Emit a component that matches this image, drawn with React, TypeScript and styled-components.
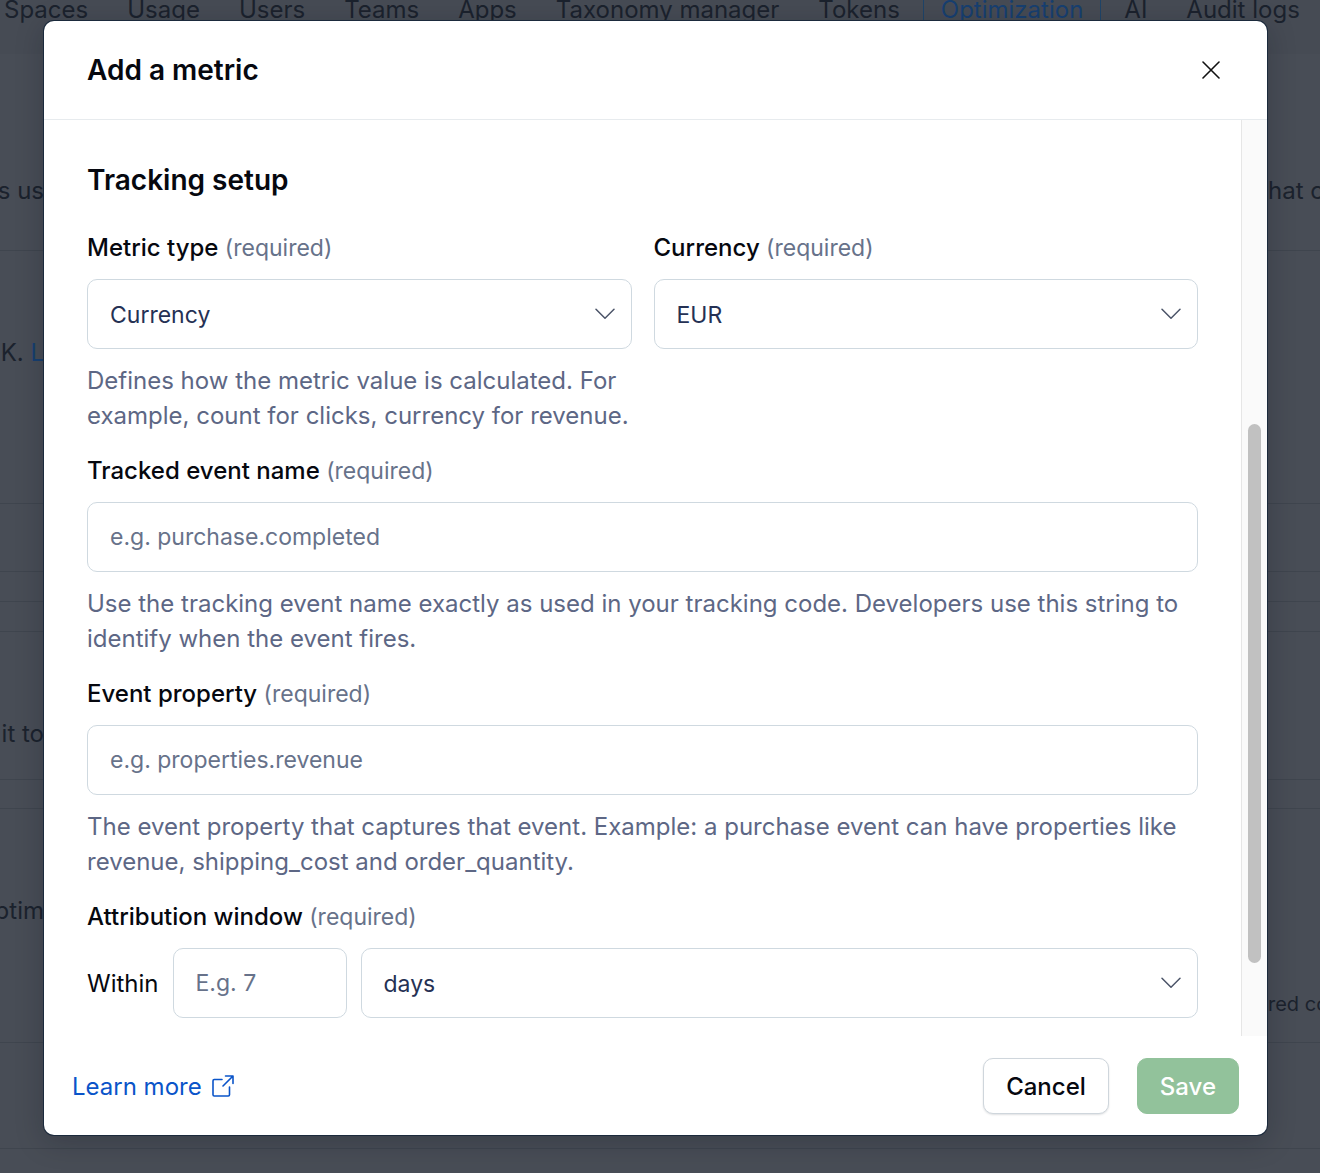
import React, { useId } from "react";
import styled, { createGlobalStyle } from "styled-components";

const Global = createGlobalStyle`
  *, *::before, *::after { box-sizing: border-box; }
  body { margin: 0; background: #484d56; }
  body, button, input, select {
    font-family: Inter, "Liberation Sans", sans-serif;
    font-size: 24px;
    line-height: 35px;
  }
`;

const Stage = styled.div`
  display: grid;
  grid-template-columns: minmax(0, 1fr);
  min-height: 100vh;
  overflow: hidden;
  > * { grid-area: 1 / 1; }
`;

const Page = styled.div`
  display: flex;
  flex-direction: column;
  height: 0;
  min-height: 100%;
  overflow: hidden;
  background: #484d56;
  color: #1b222d;
`;

const Tabs = styled.nav`
  display: flex;
  gap: 39px;
  flex: none;
  height: 54px;
  padding: 0 4px;
  background: #464b54;
  line-height: 19px;
  white-space: nowrap;
`;

const Tab = styled.a<{ $active?: boolean }>`
  height: 54px;
  text-decoration: none;
  color: ${(p) => (p.$active ? "#173f70" : "inherit")};
  padding: ${(p) => (p.$active ? "0 17px" : "0")};
  margin: ${(p) => (p.$active ? "0 -16px" : "0")};
  border: solid #1f4468;
  border-width: ${(p) => (p.$active ? "0 1px" : "0")};
`;

const Band = styled.section<{ $height: number; $top?: number }>`
  display: flex;
  justify-content: space-between;
  flex: none;
  height: ${(p) => p.$height}px;
  padding-top: ${(p) => p.$top ?? 0}px;
  border-bottom: 1px solid #3f454e;
  white-space: nowrap;
`;

const LeftEdge = styled.div`
  display: flex;
  justify-content: flex-end;
  width: 44px;
  overflow: hidden;
  white-space: pre;
`;

const RightEdge = styled.div<{ $low?: boolean }>`
  width: 52px;
  overflow: hidden;
  font-size: ${(p) => (p.$low ? 20 : 24)}px;
  padding-top: ${(p) => (p.$low ? 94 : 0)}px;
`;

const PageLink = styled.a`
  color: #173f70;
  text-decoration: none;
`;

const Dialog = styled.div`
  display: flex;
  flex-direction: column;
  z-index: 1;
  align-self: start;
  margin: 21px 53px 38px 44px;
  border-radius: 10px;
  background: #fff;
  color: #06080f;
  box-shadow: 0 0 0 1px #1b2a3c, 0 6px 28px rgba(10, 16, 26, 0.25);
`;

const Header = styled.header`
  display: flex;
  align-items: center;
  justify-content: space-between;
  height: 99px;
  padding: 0 43px;
  border-bottom: 1px solid #e7ebee;
`;

const Title = styled.h2`
  margin: 0;
  font-size: 28px;
  line-height: 36px;
  font-weight: 600;
`;

const CloseButton = styled.button`
  display: grid;
  place-items: center;
  width: 26px;
  height: 26px;
  padding: 0;
  border: 0;
  background: none;
  color: #111;
`;

const Body = styled.div`
  display: grid;
  grid-template-columns: minmax(0, 1fr) 26px;
`;

const Form = styled.form`
  display: flex;
  flex-direction: column;
  gap: 20px;
  padding: 42px 43px 18px;
`;

const SectionTitle = styled.h3`
  margin: 0 0 12px;
  font-size: 28px;
  line-height: 36px;
  font-weight: 600;
`;

const Columns = styled.div`
  display: grid;
  grid-template-columns: 1fr 1fr;
  gap: 22px;
`;

const FieldBox = styled.div`
  display: flex;
  flex-direction: column;
  gap: 14px;
  min-width: 0;
`;

const Label = styled.label`
  font-weight: 500;
`;

const Required = styled.span`
  font-size: 23px;
  line-height: 1;
  font-weight: 400;
  color: #67728a;
`;

const Hint = styled.p`
  margin: 0;
  color: #5d6785;
`;

const Input = styled.input<{ $width?: number }>`
  width: ${(p) => (p.$width ? `${p.$width}px` : "100%")};
  height: 70px;
  padding: 0 22px;
  border: 1px solid #cfd9e0;
  border-radius: 10px;
  background: #fff;
  color: #253154;
  font-size: 23px;
  &::placeholder { color: #67728a; opacity: 1; }
`;

const SelectBox = styled.div`
  display: grid;
  align-items: center;
  flex: 1;
  > * { grid-area: 1 / 1; }
  > svg { justify-self: end; margin-right: 17px; pointer-events: none; }
`;

const SelectControl = styled.select`
  appearance: none;
  width: 100%;
  height: 70px;
  padding: 2px 50px 0 22px;
  border: 1px solid #cfd9e0;
  border-radius: 10px;
  background: #fff;
  color: #253154;
  font-size: 23px;
`;

const Inline = styled.div`
  display: flex;
  align-items: center;
  gap: 14px;
`;

const Track = styled.div`
  display: grid;
  grid-template-rows: 304fr 539fr 73fr;
  padding: 0 6px;
  border-left: 1px solid #e6e6e6;
  background: #fafafa;
`;

const Thumb = styled.div`
  grid-row: 2;
  border-radius: 7px;
  background: #c1c1c1;
`;

const Footer = styled.footer`
  display: flex;
  align-items: center;
  gap: 28px;
  padding: 22px 28px 21px;
`;

const LearnMore = styled.a`
  display: flex;
  align-items: center;
  gap: 10px;
  margin-right: auto;
  color: #0a54c9;
  text-decoration: none;
`;

const Button = styled.button<{ $primary?: boolean }>`
  height: 56px;
  padding: 0 22px;
  border-radius: 10px;
  border: 1px solid ${(p) => (p.$primary ? "#92c29b" : "#cfd6dc")};
  background: ${(p) => (p.$primary ? "#92c29b" : "#fff")};
  color: ${(p) => (p.$primary ? "#fff" : "#06080f")};
  box-shadow: ${(p) => (p.$primary ? "none" : "0 1px 2px rgba(25, 37, 50, 0.14)")};
  font-weight: 500;
`;

const Chevron = () => (
  <svg width="20" height="12" viewBox="0 0 20 12" fill="none" stroke="#4b5468" strokeWidth="1.5" aria-hidden="true">
    <path d="M1 1.2 10 10.2 19 1.2" strokeLinecap="round" strokeLinejoin="round" />
  </svg>
);

const External = () => (
  <svg width="22" height="22" viewBox="0 0 22 22" fill="none" stroke="currentColor" strokeWidth="1.6" aria-hidden="true">
    <path d="M10 4.5H2.2Q1 4.5 1 5.7V19.8Q1 21 2.2 21H16.3Q17.5 21 17.5 19.8V12" strokeLinecap="round" />
    <path d="M13.5 1H21V8.5M21 1 11 11" strokeLinecap="round" strokeLinejoin="round" />
  </svg>
);

type FieldProps = {
  label: string;
  hint?: string;
  children: (id: string) => React.ReactNode;
};

function Field({ label, hint, children }: FieldProps) {
  const id = useId();
  return (
    <FieldBox>
      <Label htmlFor={id}>
        {label} <Required>(required)</Required>
      </Label>
      {children(id)}
      {hint && <Hint>{hint}</Hint>}
    </FieldBox>
  );
}

function Select({ id, options, label }: { id?: string; options: string[]; label?: string }) {
  return (
    <SelectBox>
      <SelectControl id={id} aria-label={label}>
        {options.map((o) => (
          <option key={o}>{o}</option>
        ))}
      </SelectControl>
      <Chevron />
    </SelectBox>
  );
}

const tabs = ["Spaces", "Usage", "Users", "Teams", "Apps", "Taxonomy manager", "Tokens", "Optimization", "AI", "Audit logs"];

export default function App() {
  return (
    <>
      <Global />
      <Stage>
        <Page>
          <Tabs>
            {tabs.map((t) => (
              <Tab key={t} href="#" $active={t === "Optimization"}>
                {t}
              </Tab>
            ))}
          </Tabs>
          <Band $height={197} $top={119}>
            <LeftEdge>s us</LeftEdge>
            <RightEdge>hat c</RightEdge>
          </Band>
          <Band $height={253} $top={84}>
            <LeftEdge>
              DK. <PageLink href="#">L</PageLink>
            </LeftEdge>
          </Band>
          <Band $height={68} />
          <Band $height={30} />
          <Band $height={30} />
          <Band $height={148} $top={84}>
            <LeftEdge>it to</LeftEdge>
          </Band>
          <Band $height={29} />
          <Band $height={234} $top={84}>
            <LeftEdge>optim</LeftEdge>
            <RightEdge $low>red co</RightEdge>
          </Band>
          <Band $height={106} />
        </Page>

        <Dialog role="dialog" aria-modal="true" aria-labelledby="dialog-title">
          <Header>
            <Title id="dialog-title">Add a metric</Title>
            <CloseButton type="button" aria-label="Close">
              <svg width="18" height="18" viewBox="0 0 18 18" fill="none" stroke="currentColor" strokeWidth="1.6" strokeLinecap="round">
                <path d="M1 1 17 17M17 1 1 17" />
              </svg>
            </CloseButton>
          </Header>
          <Body>
            <Form id="metric-form">
              <SectionTitle>Tracking setup</SectionTitle>
              <Columns>
                <Field
                  label="Metric type"
                  hint="Defines how the metric value is calculated. For example, count for clicks, currency for revenue."
                >
                  {(id) => <Select id={id} options={["Currency", "Count"]} />}
                </Field>
                <Field label="Currency">
                  {(id) => (
                    <div>
                      <Select id={id} options={["EUR", "USD"]} />
                    </div>
                  )}
                </Field>
              </Columns>
              <Field
                label="Tracked event name"
                hint="Use the tracking event name exactly as used in your tracking code. Developers use this string to identify when the event fires."
              >
                {(id) => <Input id={id} placeholder="e.g. purchase.completed" />}
              </Field>
              <Field
                label="Event property"
                hint="The event property that captures that event. Example: a purchase event can have properties like revenue, shipping_cost and order_quantity."
              >
                {(id) => <Input id={id} placeholder="e.g. properties.revenue" />}
              </Field>
              <Field label="Attribution window">
                {(id) => (
                  <Inline>
                    <span>Within</span>
                    <Input id={id} $width={174} placeholder="E.g. 7" />
                    <Select label="Window unit" options={["days", "hours"]} />
                  </Inline>
                )}
              </Field>
            </Form>
            <Track>
              <Thumb />
            </Track>
          </Body>
          <Footer>
            <LearnMore href="#">
              Learn more <External />
            </LearnMore>
            <Button type="button">Cancel</Button>
            <Button type="submit" form="metric-form" $primary>
              Save
            </Button>
          </Footer>
        </Dialog>
      </Stage>
    </>
  );
}
